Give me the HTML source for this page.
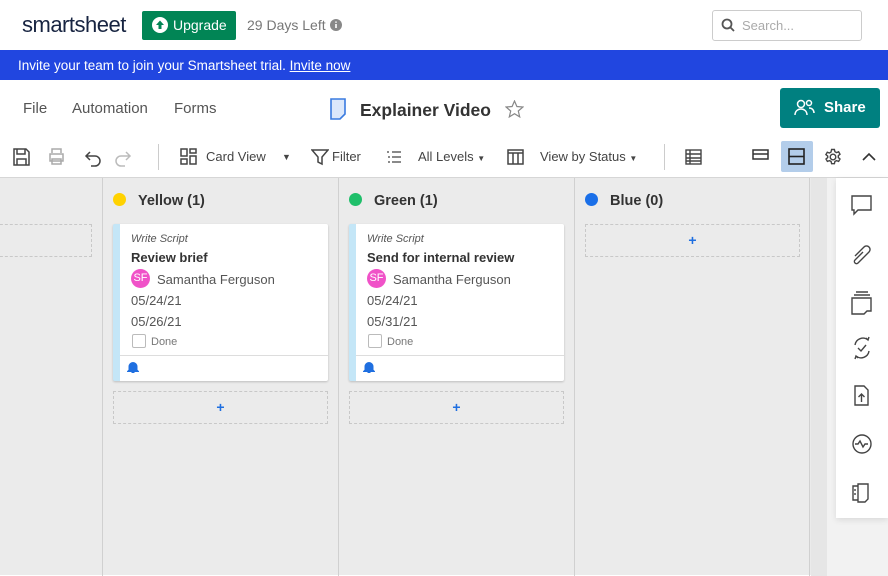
<!DOCTYPE html>
<html><head><meta charset="utf-8"><style>
*{box-sizing:border-box;margin:0;padding:0}
body{width:888px;height:575px;overflow:hidden;font-family:"Liberation Sans",sans-serif;background:#fff;position:relative;color:#333}
.abs{position:absolute}
.logo{left:22px;top:12px;font-size:22px;color:#172441;letter-spacing:-0.5px}
.up{left:142px;top:11px;width:94px;height:29px;background:#018555;border-radius:2px;color:#fff;font-size:14px;line-height:29px;padding-left:31px}
.days{left:247px;top:17px;font-size:14px;color:#777}
.search{left:712px;top:10px;width:150px;height:31px;border:1px solid #ccc;border-radius:3px;font-size:13px;color:#aaa;line-height:29px;padding-left:29px}
.banner{left:0;top:50px;width:888px;height:30px;background:#2146e0;color:#fff;font-size:13.5px;line-height:31px;padding-left:18px}
.menu{top:100px;font-size:15px;color:#555}
.title{left:360px;top:100px;font-size:17.5px;font-weight:bold;color:#333}
.share{left:780px;top:88px;width:100px;height:40px;background:#008080;border-radius:3px;color:#fff;font-weight:bold;font-size:15px;line-height:40px;padding-left:44px}
.tb{top:149px;font-size:13px;color:#444}
.board{left:0;top:177px;width:888px;height:398px;background:#ebebeb;border-top:1px solid #d6d6d6}
.col{position:absolute;top:0;height:398px;border-left:1px solid #d0d0d0}
.hd{position:absolute;left:10px;top:15px;font-size:14.5px;font-weight:bold;color:#333}
.hd b{display:inline-block;width:13px;height:13px;border-radius:50%;vertical-align:-1px;margin-right:12px}
.card{position:absolute;left:10px;top:46px;width:215px;height:157px;background:#fff;border-left:7px solid #c4e6f7;box-shadow:0 1px 2px rgba(0,0,0,.2);border-radius:2px}
.card .t{position:absolute;left:11px;font-size:13px;color:#333}
.add{position:absolute;left:10px;width:215px;height:33px;border:1px dashed #c8c8c8;color:#1f6fe0;text-align:center;line-height:31px;font-weight:bold;font-size:14px}
.rp{left:836px;top:178px;width:52px;height:340px;background:#fff;box-shadow:0 2px 6px rgba(0,0,0,.1)}
</style></head><body>
<div class="abs logo">smartsheet</div>
<div class="abs up">Upgrade</div>
<svg class="abs" style="left:152px;top:17px" width="16" height="16" viewBox="0 0 16 16"><circle cx="8" cy="8" r="8" fill="#fff"/><path d="M8 3.5l-4 4.5h2.5v4h3V8H12z" fill="#018555"/></svg>
<div class="abs days">29 Days Left</div>
<svg class="abs" style="left:330px;top:19px" width="12" height="12" viewBox="0 0 12 12"><circle cx="6" cy="6" r="6" fill="#888"/><path d="M6 5v4M6 2.5v1.2" stroke="#fff" stroke-width="1.6"/></svg>
<div class="abs search">Search...</div>
<svg class="abs" style="left:721px;top:18px" width="14" height="14" viewBox="0 0 14 14"><circle cx="6" cy="6" r="4.5" fill="none" stroke="#555" stroke-width="1.8"/><path d="M9.5 9.5L13 13" stroke="#555" stroke-width="1.8"/></svg>
<div class="abs banner">Invite your team to join your Smartsheet trial. <u>Invite now</u></div>
<div class="abs menu" style="left:23px">File</div>
<div class="abs menu" style="left:72px">Automation</div>
<div class="abs menu" style="left:174px">Forms</div>
<svg class="abs" style="left:329px;top:98px" width="18" height="22" viewBox="0 0 18 22"><path d="M2 1h14v15l-5 5H2z" fill="#dce8fb" stroke="#3a7be0" stroke-width="1.6"/></svg>
<div class="abs title">Explainer Video</div>
<svg class="abs" style="left:505px;top:100px" width="19" height="18" viewBox="0 0 19 18"><path d="M9.5 1l2.4 5.5 6 .5-4.6 4 1.4 5.9-5.2-3.2-5.2 3.2 1.4-5.9L1.1 7l6-.5z" fill="none" stroke="#888" stroke-width="1.2"/></svg>
<div class="abs share">Share</div>
<svg class="abs" style="left:794px;top:99px" width="22" height="18" viewBox="0 0 22 18" fill="none" stroke="#fff" stroke-width="1.5"><circle cx="7" cy="5" r="3.5"/><path d="M1 16c0-4 3-6 6-6s6 2 6 6"/><circle cx="15" cy="4" r="2.5"/><path d="M15 9c3 0 5 2 5 5"/></svg>
<svg class="abs" style="left:12px;top:147px" width="130" height="20" viewBox="0 0 130 20" fill="none" stroke="#444" stroke-width="1.5"><path d="M2 2h12l3 3v13H2z M5 2v5h8V2 M5 18v-6h9v6"/><g stroke="#aaa"><path d="M40 6V2h9v4M38 7h13v7H38zM40 12h9v5h-9z"/></g><path d="M78 5l-4 4 4 4M74 9h9a5 5 0 010 10h-4"/><g stroke="#bbb"><path d="M114 5l4 4-4 4M118 9h-9a5 5 0 000 10h4"/></g></svg>
<div class="abs" style="left:158px;top:144px;width:1px;height:26px;background:#ccc"></div>
<svg class="abs" style="left:180px;top:148px" width="18" height="18" viewBox="0 0 18 18" fill="none" stroke="#444" stroke-width="1.5"><rect x="1" y="1" width="6" height="7"/><rect x="1" y="11" width="6" height="5"/><rect x="10" y="1" width="6" height="4"/><rect x="10" y="8" width="6" height="8"/></svg>
<div class="abs tb" style="left:206px">Card View</div>
<div class="abs tb" style="left:282px;font-size:9px;top:152px">▼</div>
<svg class="abs" style="left:311px;top:148px" width="18" height="18" viewBox="0 0 18 18" fill="none" stroke="#444" stroke-width="1.5"><path d="M1 2h16l-6 7v7l-4-2V9z"/></svg>
<div class="abs tb" style="left:332px">Filter</div>
<svg class="abs" style="left:386px;top:149px" width="16" height="16" viewBox="0 0 16 16" fill="none" stroke="#444" stroke-width="1.3"><path d="M6 3h9M6 8h9M6 13h9M1 3h2M2 8h2M2 13h2"/></svg>
<div class="abs tb" style="left:418px">All Levels <span style="font-size:8px">▼</span></div>
<svg class="abs" style="left:507px;top:148px" width="18" height="18" viewBox="0 0 18 18" fill="none" stroke="#444" stroke-width="1.5"><rect x="1" y="2" width="15" height="14"/><path d="M1 5h15M6 5v11M11 5v11"/></svg>
<div class="abs tb" style="left:540px">View by Status <span style="font-size:8px">▼</span></div>
<div class="abs" style="left:664px;top:144px;width:1px;height:26px;background:#ccc"></div>
<svg class="abs" style="left:685px;top:149px" width="18" height="16" viewBox="0 0 18 16" fill="none" stroke="#444" stroke-width="1.4"><rect x="1" y="1" width="15" height="14"/><path d="M1 5h15M1 9h15M1 12h15M5 1v14"/></svg>
<svg class="abs" style="left:752px;top:149px" width="18" height="12" viewBox="0 0 18 12" fill="none" stroke="#333" stroke-width="1.5"><rect x="1" y="1" width="15" height="9"/><path d="M1 5h15"/></svg>
<div class="abs" style="left:781px;top:141px;width:32px;height:31px;background:#b3cdea;border-radius:2px"></div>
<svg class="abs" style="left:788px;top:148px" width="18" height="18" viewBox="0 0 18 18" fill="none" stroke="#222" stroke-width="1.6"><rect x="1" y="1" width="15" height="15"/><path d="M1 8.5h15"/></svg>
<svg class="abs" style="left:824px;top:148px" width="18" height="18" viewBox="0 0 18 18" fill="none" stroke="#444" stroke-width="1.4"><circle cx="9" cy="9" r="2.8"/><path d="M7.6 1.5h2.8l.5 2.2 1.6.9 2.1-.8 1.4 2.4-1.7 1.5v1.8l1.7 1.5-1.4 2.4-2.1-.8-1.6.9-.5 2.2H7.6l-.5-2.2-1.6-.9-2.1.8-1.4-2.4 1.7-1.5V8.1L1.9 6.6l1.4-2.4 2.1.8 1.6-.9z"/></svg>
<svg class="abs" style="left:862px;top:152px" width="14" height="9" viewBox="0 0 14 9" fill="none" stroke="#333" stroke-width="1.6"><path d="M1 8l6-6 6 6"/></svg>
<div class="abs board">
 <div class="add" style="left:-10px;top:46px;width:102px">&nbsp;</div>
 <div class="col" style="left:102px;width:236px">
  <div class="hd"><b style="background:#ffd200"></b>Yellow (1)</div>
  <div class="card">
   <div class="t" style="top:9px;font-size:11px;font-style:italic;color:#555">Write Script</div>
   <div class="t" style="top:26px;font-weight:bold">Review brief</div>
   <div class="abs" style="left:11px;top:45px;width:19px;height:19px;border-radius:50%;background:#f052c8;color:#fff;font-size:11px;text-align:center;line-height:19px">SF</div>
   <div class="t" style="left:37px;top:48px;color:#555">Samantha Ferguson</div>
   <div class="t" style="top:69px;color:#555">05/24/21</div>
   <div class="t" style="top:90px;color:#555">05/26/21</div>
   <div class="abs" style="left:12px;top:110px;width:14px;height:14px;border:1px solid #bbb;border-radius:2px"></div>
   <div class="t" style="left:31px;top:112px;font-size:11px;color:#777">Done</div>
   <div class="abs" style="left:0;top:131px;width:208px;border-top:1px solid #ddd"></div>
   <svg class="abs" style="left:7px;top:137px" width="12" height="13" viewBox="0 0 12 13"><path d="M2 9V5.5a4 4 0 018 0V9l1.5 1.5h-11z M4.5 11.5h3" fill="#1f6fe0" stroke="#1f6fe0"/></svg>
  </div>
  <div class="add" style="top:213px">+</div>
 </div>
 <div class="col" style="left:338px;width:236px">
  <div class="hd"><b style="background:#1fbf6a"></b>Green (1)</div>
  <div class="card">
   <div class="t" style="top:9px;font-size:11px;font-style:italic;color:#555">Write Script</div>
   <div class="t" style="top:26px;font-weight:bold">Send for internal review</div>
   <div class="abs" style="left:11px;top:45px;width:19px;height:19px;border-radius:50%;background:#f052c8;color:#fff;font-size:11px;text-align:center;line-height:19px">SF</div>
   <div class="t" style="left:37px;top:48px;color:#555">Samantha Ferguson</div>
   <div class="t" style="top:69px;color:#555">05/24/21</div>
   <div class="t" style="top:90px;color:#555">05/31/21</div>
   <div class="abs" style="left:12px;top:110px;width:14px;height:14px;border:1px solid #bbb;border-radius:2px"></div>
   <div class="t" style="left:31px;top:112px;font-size:11px;color:#777">Done</div>
   <div class="abs" style="left:0;top:131px;width:208px;border-top:1px solid #ddd"></div>
   <svg class="abs" style="left:7px;top:137px" width="12" height="13" viewBox="0 0 12 13"><path d="M2 9V5.5a4 4 0 018 0V9l1.5 1.5h-11z M4.5 11.5h3" fill="#1f6fe0" stroke="#1f6fe0"/></svg>
  </div>
  <div class="add" style="top:213px">+</div>
 </div>
 <div class="col" style="left:574px;width:236px;border-right:1px solid #d0d0d0">
  <div class="hd"><b style="background:#1a6fe8"></b>Blue (0)</div>
  <div class="add" style="top:46px;height:33px">+</div>
 </div>
 <div class="abs" style="left:811px;top:0;width:16px;height:398px;background:#e6e6e6"></div>
 <div class="abs" style="left:827px;top:0;width:61px;height:398px;background:#f2f2f2"></div>
</div>
<div class="abs rp"></div>
<svg class="abs" style="left:848px;top:192px" width="28" height="320" viewBox="0 0 28 320" fill="none" stroke="#444" stroke-width="1.4">
<path d="M4 4h19v14H10l-4 4v-4H4z"/>
<path d="M7 64l9-9a3 3 0 015 5L10 71a2 2 0 01-3-3l8-8"/>
<path d="M8 100h12M6 103h16M4 106h19v13h-4l-3 3H4z"/>
<path d="M7 153a8 8 0 0113-5M18 146l2 2 1-3M21 159a8 8 0 01-13 5M10 166l-2-2-1 3M10 156l3 3 5-6"/>
<path d="M7 194h9l4 4v15H7zM13.5 210v-8M10.5 205l3-3 3 3"/>
<circle cx="14" cy="252" r="9"/><path d="M7 252h3l2-3 3 6 2-3h3"/>
<path d="M10 292h10v15l-3 3H10zM5 294h5v14H5zM7 297v2M7 301v2"/>
</svg>
</body></html>
